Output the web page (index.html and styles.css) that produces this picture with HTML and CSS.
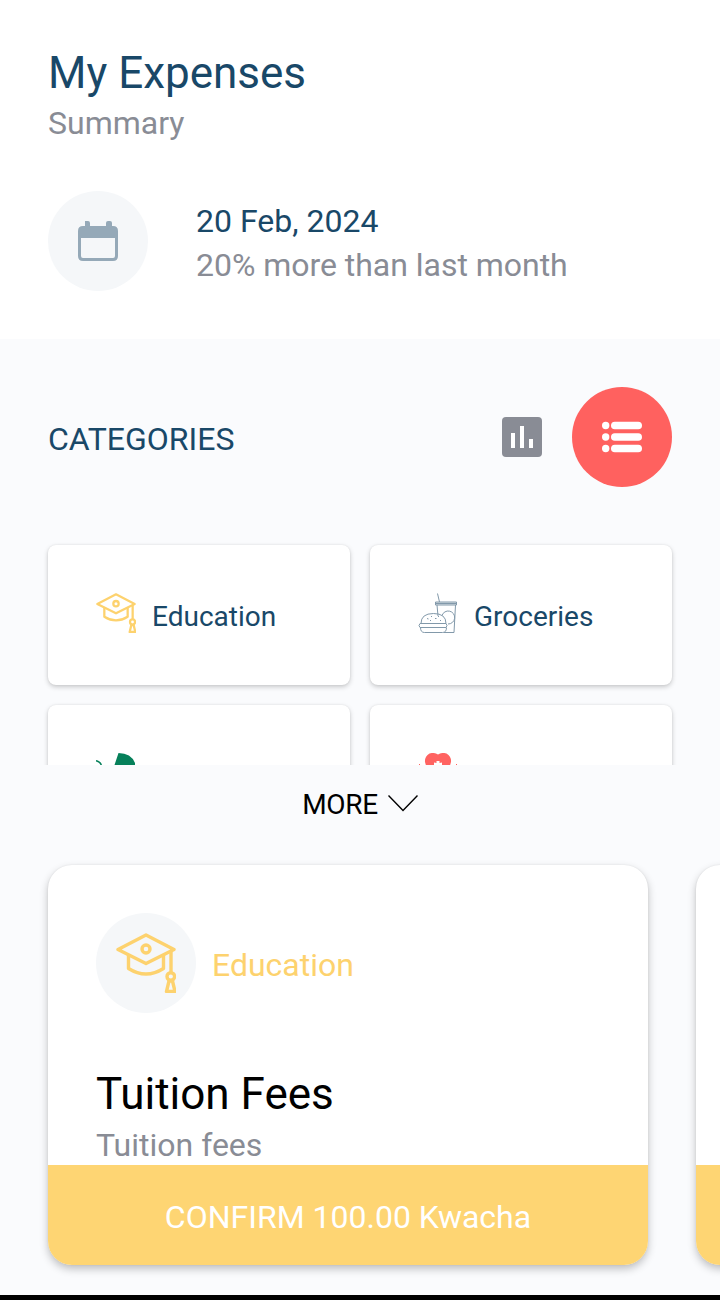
FILE: index.html
```
<!DOCTYPE html>
<html lang="en">
<head>
<meta charset="utf-8">
<title>My Expenses</title>
<link rel="stylesheet" href="styles.css">
</head>
<body>
<svg class="defs" width="0" height="0">
  <symbol id="cap" viewBox="0 0 60 60">
    <g fill="none" stroke="currentColor" stroke-width="3.4" stroke-linejoin="round">
      <path d="M2 16.500 30 2l28 14.500L30 30.500z"/>
      <circle cx="30" cy="16" r="4"/>
      <path d="M12.500 22v13.500q17.500 11 35 0V22M55 18v22"/>
      <circle cx="54.800" cy="43.500" r="3.800"/>
      <path d="M53 48l-2.500 10.500h8.500L56.500 48z"/>
    </g>
  </symbol>
</svg>
<main class="screen">
  <header class="header">
    <h1 class="title">My Expenses</h1>
    <p class="subtitle">Summary</p>
    <div class="summary">
      <div class="round">
        <svg width="40" height="40" viewBox="0 0 40 40" fill="#95a9b8">
          <path fill-rule="evenodd" d="M7 0h3q2 0 2 2v3h16V2q0-2 2-2h2q2 0 2 2v3h1q5 0 5 5v25q0 5-5 5H5q-5 0-5-5V10q0-5 5-5h2zM3 17v18q0 2 2 2h30q2 0 2-2V17z"/>
        </svg>
      </div>
      <div>
        <p class="date">20 Feb, 2024</p>
        <p class="change">20% more than last month</p>
      </div>
    </div>
  </header>

  <section class="toolbar">
    <h2 class="heading">CATEGORIES</h2>
    <svg class="chart" width="40" height="40" viewBox="0 0 40 40">
      <rect width="40" height="40" rx="4" fill="#898c95"/>
      <path d="M9 16h4v15H9zM18 9h4v22h-4zM27 22h4v9h-4z" fill="#fff"/>
    </svg>
    <div class="round round-active">
      <svg width="40" height="32" viewBox="0 0 40 32" fill="#fff">
        <circle cx="3.700" cy="4.500" r="3.700"/><circle cx="3.700" cy="16" r="3.700"/><circle cx="3.700" cy="27.500" r="3.700"/>
        <rect x="9" y=".7" width="31" height="7.600" rx="3.800"/><rect x="9" y="12.200" width="31" height="7.600" rx="3.800"/><rect x="9" y="23.700" width="31" height="7.600" rx="3.800"/>
      </svg>
    </div>
  </section>

  <section class="categories">
    <div class="category">
      <svg class="category-icon gold" width="40" height="40"><use href="#cap"/></svg>
      <span class="category-name">Education</span>
    </div>
    <div class="category">
      <svg class="category-icon" width="40" height="40" viewBox="0 0 40 40" fill="none" stroke="#8299aa" stroke-width="1">
        <path d="M17.500 9h21v3h-21zM19 12l1 11M37.500 12 36 39.500H26M21.500 9 19.500.5"/>
        <path d="M17 10.500h22" stroke-width="1.500"/>
        <path d="M24 22.500a6.500 6.500 0 1 1 6 8.500"/>
        <path d="M3 30.500q0-10 12.500-10T28 30.500M2 30.500h26q2 2 0 4H2q-2-2 0-4zM2.500 34.500q0 5 4 5h18q4 0 4-5"/>
        <path d="M9 25.500l1.500.5M13 23.500h1M17 25.500h1.500M20 23.500h1M12 27.500h1M22 27.500h1"/>
      </svg>
      <span class="category-name">Groceries</span>
    </div>
    <div class="category">
      <svg class="category-icon" width="40" height="40" viewBox="0 0 40 40" fill="#06805a">
        <path d="M0 7q5 1 6 5H4.500Q3.500 9.500 0 8.500zM22.500 0Q35 0 39 10v7H18.500v-5z"/>
      </svg>
    </div>
    <div class="category">
      <svg class="category-icon" width="40" height="40" viewBox="0 0 40 40" fill="#ff6361">
        <path fill-rule="evenodd" d="M20 1.500Q24-1 28.500.5 33.500 3.500 33 9l-2 7H9L7 9q-.5-5.500 4.500-8.500Q16-1 20 1.500zM18.500 8v2L16 9.500V15h8V9.500l-2.500.5V8z"/>
        <path d="M1 11h1v1H1zM38 11h1v1h-1z"/>
      </svg>
    </div>
  </section>

  <div class="more">
    <span class="more-label">MORE</span>
    <svg width="30" height="17" viewBox="0 0 30 17" fill="none" stroke="#000" stroke-width="1.400"><path d="M.5.500 15 15.500 29.500.5"/></svg>
  </div>

  <section class="expenses">
    <article class="expense">
      <div class="expense-body">
        <div class="expense-category">
          <div class="round"><svg class="gold" width="60" height="60"><use href="#cap"/></svg></div>
          <span class="expense-label">Education</span>
        </div>
        <h3 class="expense-title">Tuition Fees</h3>
        <p class="expense-note">Tuition fees</p>
      </div>
      <div class="confirm">CONFIRM 100.00 Kwacha</div>
    </article>
    <article class="expense">
      <div class="expense-body"></div>
      <div class="confirm"></div>
    </article>
  </section>
  <footer class="nav-edge"></footer>
</main>
</body>
</html>
```
FILE: styles.css
```
* { box-sizing: border-box; }
body, h1, h2, h3, p { margin: 0; font-weight: 400; }
body { font-family: Roboto, sans-serif; background: #fafbfd; }
svg { display: block; flex: none; }
.defs { position: absolute; }
.screen { width: 720px; height: 1300px; overflow: hidden; display: flex; flex-direction: column; }
.header { height: 339px; flex: none; padding: 47px 48px 0; background: #fff; }
.title { font-size: 44px; line-height: 52px; color: #194868; }
.subtitle { margin-top: 5px; font-size: 32px; line-height: 38px; color: #898c95; }
.summary { display: flex; gap: 48px; margin-top: 49px; }
.round { width: 100px; height: 100px; flex: none; border-radius: 50%; background: #f5f7f9; display: flex; align-items: center; justify-content: center; }
.date, .change { font-size: 32px; line-height: 44px; }
.date { margin-top: 8px; color: #194868; }
.change { color: #898c95; letter-spacing: -.03px; }
.toolbar { height: 196px; flex: none; padding: 48px 48px 0; display: flex; align-items: flex-start; }
.heading { flex: 1; padding-top: 33px; font-size: 32px; line-height: 38px; color: #194868; }
.chart { margin: 30px 30px 0 0; }
.round-active { background: #ff615f; }
.categories { height: 230px; flex: none; overflow: hidden; padding: 10px 48px 0; display: grid; grid-template-columns: 1fr 1fr; grid-auto-rows: 140px; gap: 20px; }
.category { padding: 48px; display: flex; gap: 16px; border-radius: 8px; background: #fff; box-shadow: 0 2px 5px rgba(0,0,0,.2), 0 0 2px rgba(0,0,0,.08); }
.category-name { padding-top: 7px; font-size: 28px; line-height: 33px; color: #194868; }
.gold { color: #fdd26e; }
.more { height: 100px; flex: none; padding-top: 23px; display: flex; justify-content: center; gap: 10px; font-size: 28px; line-height: 33px; color: #000; }
.more-label { letter-spacing: -.3px; }
.more svg { margin-top: 7px; }
.expenses { height: 430px; flex: none; padding-left: 48px; display: flex; gap: 48px; }
.expense { width: 600px; height: 400px; flex: none; display: flex; flex-direction: column; border-radius: 24px; background: #fff; box-shadow: 0 4px 8px rgba(0,0,0,.24), 0 0 2px rgba(0,0,0,.08); }
.expense-body { height: 300px; padding: 48px 48px 0; }
.expense-category { display: flex; gap: 16px; }
.expense-label { padding-top: 33px; font-size: 32px; line-height: 38px; color: #fdd26e; }
.expense-title { margin-top: 55px; font-size: 44px; line-height: 52px; color: #000; }
.expense-note { margin-top: 6px; font-size: 32px; line-height: 38px; color: #898c95; }
.confirm { height: 100px; padding-top: 33px; border-radius: 0 0 24px 24px; background: #fed573; color: #fff; font-size: 32px; line-height: 38px; text-align: center; }
.nav-edge { height: 5px; flex: none; background: #000; }
```
